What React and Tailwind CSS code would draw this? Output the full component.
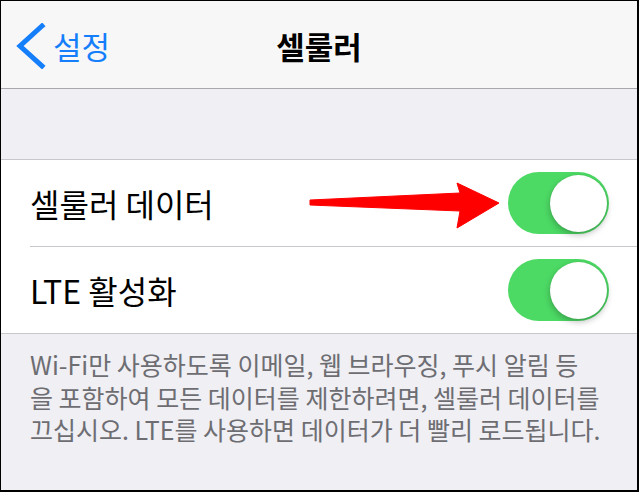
import React from "react";

const font = { fontFamily: '"Noto Sans CJK KR", "Noto Sans", sans-serif' };

function Toggle() {
  return (
    <div className="w-[101px] h-[62px] rounded-full bg-[#4cd964] flex items-center justify-end pr-[2px]">
      <div className="w-[57px] h-[57px] rounded-full bg-white shadow-[0_3px_6px_rgba(0,0,0,0.25),0_0_1px_rgba(0,0,0,0.15)]" />
    </div>
  );
}

export default function App() {
  return (
    <div
      className="relative w-[639px] h-[492px] overflow-hidden bg-[#efeff4] border-t border-l border-r-2 border-b-2 border-black flex flex-col"
      style={font}
    >
      <div className="h-[88px] shrink-0 bg-[#f7f7f8] border-b border-[#a8a8ac] grid grid-cols-[1fr_auto_1fr] items-center">
        <div className="flex items-center pl-[13px] pt-[2px] text-[#157efb]">
          <svg width="32" height="46" viewBox="0 0 32 46" className="mr-[7px]">
            <path d="M28 3 L6 23 L28 43" fill="none" stroke="#157efb" strokeWidth="5" strokeLinecap="square" />
          </svg>
          <span className="text-[31px] leading-none">설정</span>
        </div>
        <div className="text-[31px] font-bold text-black leading-none pt-[2px]">셀룰러</div>
        <div />
      </div>
      <div className="h-[70px] shrink-0" />
      <div className="bg-white border-t border-b border-[#c8c7cc] shrink-0">
        <div className="h-[86px] flex items-center justify-between pl-[29px] pr-[28px]">
          <span className="text-[32px] text-black leading-none">셀룰러 데이터</span>
          <Toggle />
        </div>
        <div className="ml-[29px] h-px bg-[#c8c7cc]" />
        <div className="h-[86px] flex items-center justify-between pl-[29px] pr-[28px]">
          <span className="text-[32px] text-black leading-none">LTE 활성화</span>
          <Toggle />
        </div>
      </div>
      <div className="pl-[29px] pr-[10px] pt-[14px] text-[25px] leading-[32.5px] text-[#6d6d72] whitespace-nowrap">
        Wi-Fi만 사용하도록 이메일, 웹 브라우징, 푸시 알림 등
        <br />
        을 포함하여 모든 데이터를 제한하려면, 셀룰러 데이터를
        <br />
        끄십시오. LTE를 사용하면 데이터가 더 빨리 로드됩니다.
      </div>
      <svg className="absolute left-0 top-0 pointer-events-none" width="639" height="492" viewBox="0 0 639 492">
        <polygon
          points="309,199 459,192 456,182 498,202 456,227 459,210 309,204"
          fill="#ff0000"
          stroke="#ff0000"
          strokeWidth="1"
          strokeLinejoin="round"
        />
      </svg>
    </div>
  );
}
